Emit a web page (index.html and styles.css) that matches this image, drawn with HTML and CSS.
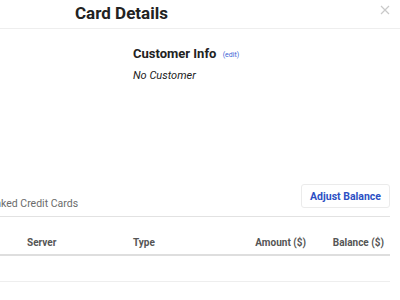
FILE: index.html
```html
<!DOCTYPE html>
<html lang="en">
  <head>
    <title>Card Details</title>
    <meta charset="UTF-8" />
    <link rel="stylesheet" href="styles.css">
  </head>
  <body>
    <div class="modal">
      <header class="modal-header">
        <h1>Card Details</h1>
        <svg class="close" width="10" height="10" viewBox="0 0 10 10">
          <path d="M1 1L9 9M9 1L1 9" stroke="#c9c9c9" stroke-width="1.2" fill="none" />
        </svg>
      </header>

      <section class="modal-body">
        <div class="card-info"></div>
        <div class="customer-info">
          <h2>Customer Info <a class="edit-link">(edit)</a></h2>
          <p class="customer-name">No Customer</p>
        </div>
      </section>

      <div class="toolbar">
        <div class="tabs">
          <span class="tab">Linked Credit Cards</span>
        </div>
        <button class="adjust-button">Adjust Balance</button>
      </div>

      <div class="table">
        <div class="table-row table-head">
          <span></span>
          <span>Server</span>
          <span>Type</span>
          <span class="num">Amount ($)</span>
          <span class="num">Balance ($)</span>
        </div>
        <div class="table-row empty-row"></div>
      </div>
    </div>
  </body>
</html>
```

FILE: styles.css
```css
* {
  margin: 0;
  padding: 0;
  box-sizing: border-box;
}

body {
  font-family: 'Roboto', 'Liberation Sans', sans-serif;
  background: #fff;
  color: #222;
  width: 400px;
  height: 300px;
  overflow: hidden;
}

.modal {
  width: 400px;
  padding-right: 10px;
}

.modal-header {
  height: 29px;
  border-bottom: 1px solid #eeeeee;
  display: flex;
  align-items: center;
  justify-content: space-between;
  padding-left: 75px;
  margin-right: -10px;
  padding-right: 10px;
}

.modal-header h1 {
  font-size: 17px;
  font-weight: 700;
  color: #222;
  margin-top: -3px;
}

.close {
  margin-top: -8px;
}

.modal-body {
  display: grid;
  grid-template-columns: 133px 1fr;
  height: 155px;
  padding-top: 16px;
}

.customer-info h2 {
  font-size: 13px;
  font-weight: 700;
  color: #222;
  line-height: 18px;
}

.edit-link {
  font-size: 7px;
  font-weight: 400;
  color: #3b63d6;
  margin-left: 3px;
  vertical-align: 1px;
}

.customer-name {
  margin-top: 5px;
  font-size: 11px;
  font-style: italic;
  color: #222;
}

.toolbar {
  display: flex;
  justify-content: space-between;
  align-items: flex-end;
  height: 33px;
  border-bottom: 1px solid #e2e2e2;
}

.tabs {
  margin-left: -13px;
  padding-bottom: 5px;
}

.tab {
  font-size: 10.5px;
  color: #6b6b6b;
}

.adjust-button {
  align-self: flex-start;
  font-family: inherit;
  font-size: 10.5px;
  font-weight: 700;
  color: #2c4fc4;
  background: #fff;
  border: 1px solid #ebebeb;
  border-radius: 3px;
  width: 89px;
  height: 24px;
}

.table-row {
  display: grid;
  grid-template-columns: 20px 106px 107px 79px 78px;
}

.table-head {
  height: 39px;
  border-bottom: 2px solid #dedede;
  align-items: center;
  padding-top: 13px;
}

.table-head span {
  font-size: 10px;
  font-weight: 700;
  color: #555;
  padding-left: 7px;
}

.table-head .num {
  text-align: right;
  padding-left: 0;
  padding-right: 6px;
}

.empty-row {
  height: 26px;
  border-bottom: 1px solid #eeeeee;
}
```
